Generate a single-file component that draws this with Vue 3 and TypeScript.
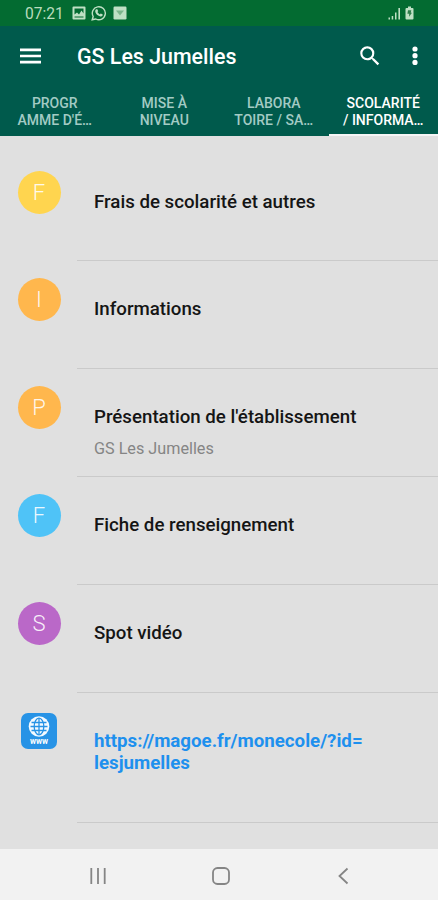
<script setup lang="ts">
interface Tab {
  first: string
  second: string
  active?: boolean
}
interface Entry {
  title: string
  letter?: string
  tone?: string
  subtitle?: string
  continuation?: string
}

const tabs: Tab[] = [
  { first: 'PROGR', second: "AMME D'É…" },
  { first: 'MISE À', second: 'NIVEAU' },
  { first: 'LABORA', second: 'TOIRE / SA…' },
  { first: 'SCOLARITÉ', second: '/ INFORMA…', active: true },
]

const entries: Entry[] = [
  { letter: 'F', tone: 'yellow', title: 'Frais de scolarité et autres' },
  { letter: 'I', tone: 'orange', title: 'Informations' },
  { letter: 'P', tone: 'orange', title: "Présentation de l'établissement", subtitle: 'GS Les Jumelles' },
  { letter: 'F', tone: 'blue', title: 'Fiche de renseignement' },
  { letter: 'S', tone: 'purple', title: 'Spot vidéo' },
  { title: 'https://magoe.fr/monecole/?id=', continuation: 'lesjumelles' },
]
</script>

<template>
  <div class="screen">
    <div class="status">
      <span class="clock">07:21</span>
      <svg class="glyph" width="14" height="14" viewBox="0 0 14 14">
        <path fill-rule="evenodd" d="M1.5.5h11a1 1 0 0 1 1 1v11a1 1 0 0 1-1 1h-11a1 1 0 0 1-1-1v-11a1 1 0 0 1 1-1zM2.5 2.5v6l2.5-2 2 2 2.5-4 2 3v-5zM2.5 10.5v1h9v-1z" />
      </svg>
      <svg class="glyph chat" width="16" height="16" viewBox="0 0 16 16">
        <path class="line" d="M1.2 14.8l1-3.3A6.5 6.5 0 1 1 4.8 14z" />
        <path d="M5.1 4.3h1.3l.8 1.9-.8.9c.5 1 1.300 1.800 2.400 2.300l.9-1 1.900.9v1.200c-.5 1-1.700 1.200-2.800.8C6.500 10.500 5 9 4.400 7.200 4 6 4.400 4.800 5.100 4.300z" />
      </svg>
      <svg class="glyph" width="14" height="14" viewBox="0 0 14 14">
        <rect x=".5" y=".5" width="13" height="13" rx="1.200" />
        <path class="cut soft" d="M3 4.500h8L7 9.500z" />
      </svg>
      <span class="grow"></span>
      <svg class="glyph signal" width="13" height="13" viewBox="0 0 13 13">
        <path d="M.5 10.500h1.500v2H.5zM3.700 9h1.500v3.500H3.700zM7 5.500h1.500v7H7zM10.400 1H12v11.500h-1.600z" />
      </svg>
      <svg class="glyph" width="9" height="14" viewBox="0 0 9 14">
        <path d="M3 .5h3v1.500h1.500a1 1 0 0 1 1 1V12.500a1 1 0 0 1-1 1h-6a1 1 0 0 1-1-1V3a1 1 0 0 1 1-1H3z" />
        <path class="cut" d="M3 4.200h3.300L5.800 6.800H7l-3 4 .2-3H2.400z" />
      </svg>
    </div>

    <header class="bar">
      <svg class="menu" width="22" height="16" viewBox="0 0 22 16">
        <path d="M0 .5h21v2.700H0zM0 6.700h21v2.600H0zM0 12.800h21v2.700H0z" />
      </svg>
      <h1>GS Les Jumelles</h1>
      <svg class="search" width="26" height="26" viewBox="0 0 24 24">
        <path d="M15.500 14h-.79l-.28-.27A6.470 6.470 0 0 0 16 9.500 6.500 6.500 0 1 0 9.500 16c1.610 0 3.090-.59 4.230-1.570l.27.28v.79l5 4.990L20.490 19zm-6 0C7.010 14 5 11.990 5 9.500S7.010 5 9.500 5 14 7.010 14 9.500 11.990 14 9.500 14z" />
      </svg>
      <svg class="more" width="6" height="20" viewBox="0 0 6 20">
        <circle cx="3" cy="3" r="2.600" /><circle cx="3" cy="9.700" r="2.600" /><circle cx="3" cy="16.400" r="2.600" />
      </svg>
    </header>

    <nav class="tabs">
      <div v-for="tab in tabs" :key="tab.first" class="tab" :class="{ active: tab.active }">
        <span>{{ tab.first }}</span>
        <span>{{ tab.second }}</span>
      </div>
    </nav>

    <main class="list">
      <div v-for="entry in entries" :key="entry.title" class="row" :class="{ tall: entry.continuation }">
        <div class="lead">
          <div v-if="entry.letter" class="avatar" :class="entry.tone">{{ entry.letter }}</div>
          <svg v-else class="web" width="36" height="36" viewBox="0 0 36 36">
            <rect width="36" height="36" rx="7" fill="#2793e6" />
            <circle cx="18" cy="13.500" r="10.300" fill="#f4faff" />
            <g fill="none" stroke="#2793e6" stroke-width="1.300">
              <path d="M18 5.500v16M10.500 9.500h15M9.500 13.500h17M10.500 17.500h15" />
              <ellipse cx="18" cy="13.500" rx="4.800" ry="8.300" />
            </g>
            <text x="18" y="31.200" text-anchor="middle" textLength="18" lengthAdjust="spacingAndGlyphs">www</text>
          </svg>
        </div>
        <div class="body">
          <div class="title" :class="{ link: entry.continuation }">
            <span>{{ entry.title }}</span>
            <span v-if="entry.continuation">{{ entry.continuation }}</span>
          </div>
          <div v-if="entry.subtitle" class="subtitle">{{ entry.subtitle }}</div>
        </div>
      </div>
    </main>

    <footer class="nav">
      <svg width="18" height="18" viewBox="0 0 18 18"><path d="M2.300 1v16M9 1v16M15.700 1v16" /></svg>
      <svg width="18" height="18" viewBox="0 0 18 18"><rect x="1" y="1" width="16" height="16" rx="4.500" /></svg>
      <svg width="18" height="18" viewBox="0 0 18 18"><path d="M13.500 1.500L5.500 9l8 7.500" /></svg>
    </footer>
  </div>
</template>

<style>
body {
  margin: 0;
}
</style>

<style scoped>
.screen {
  display: flex;
  flex-direction: column;
  width: 438px;
  height: 900px;
  overflow: hidden;
  background: #e0e0e0;
  font-family: Roboto, 'Liberation Sans', sans-serif;
}
.status {
  display: flex;
  align-items: center;
  box-sizing: border-box;
  height: 26px;
  padding: 0 24px 0 25px;
  background: #036b31;
}
.clock {
  width: 47px;
  color: #b9dcbd;
  font-size: 15.6px;
  line-height: 20px;
  padding-top: 1px;
}
.glyph {
  fill: #bfe0c4;
}
.chat {
  margin: 0 6px 0 5px;
}
.line {
  fill: none;
  stroke: #bfe0c4;
  stroke-width: 1.4;
}
.cut {
  fill: #2f7d4b;
}
.cut.soft {
  fill: #7db58c;
}
.grow {
  flex: 1;
}
.signal {
  margin-right: 4px;
}
.bar {
  display: flex;
  align-items: center;
  height: 60px;
  padding: 0 20px;
  background: #005a4c;
  fill: #fff;
}
.menu {
  width: 22px;
  margin-right: 35px;
}
h1 {
  flex: 1;
  margin: 0;
  padding-top: 2px;
  color: #fff;
  font-size: 21.4px;
  font-weight: 500;
  line-height: 30px;
  white-space: nowrap;
}
.search {
  margin-right: 29px;
}
.tabs {
  display: grid;
  grid-template-columns: repeat(4, 1fr);
  height: 50px;
  background: #005a4c;
}
.tab {
  display: flex;
  flex-direction: column;
  align-items: center;
  box-sizing: border-box;
  padding-top: 9px;
  border-bottom: 2px solid transparent;
  color: #a3cbc4;
  font-size: 14px;
  font-weight: 500;
  line-height: 17px;
  white-space: nowrap;
}
.tab.active {
  border-bottom-color: #f5f5f5;
  color: #fff;
}
.list {
  flex: 1;
  padding-top: 17.6px;
}
.row {
  display: flex;
  height: 107.8px;
}
.row.tall {
  height: 130px;
}
.lead {
  box-sizing: border-box;
  width: 77px;
  padding: 17px 0 0 17.5px;
}
.avatar {
  width: 43px;
  height: 43px;
  border-radius: 50%;
  color: rgba(255, 255, 255, 0.9);
  font-size: 22px;
  font-weight: 300;
  line-height: 43px;
  text-align: center;
}
.yellow {
  background: #ffd54f;
}
.orange {
  background: #ffb74d;
}
.blue {
  background: #4fc3f7;
}
.purple {
  background: #ba68c8;
}
.web {
  display: block;
  margin: 3px 0 0 3.5px;
}
.web text {
  fill: #fff;
  font-size: 9px;
  font-weight: 700;
}
.body {
  flex: 1;
  box-sizing: border-box;
  padding: 37px 0 0 17px;
  border-bottom: 1px solid #cacaca;
}
.title {
  display: flex;
  flex-direction: column;
  color: #151515;
  font-size: 18.7px;
  font-weight: 500;
  line-height: 22px;
  white-space: nowrap;
}
.title.link {
  color: #1e90ee;
  font-weight: 700;
}
.subtitle {
  margin-top: 11px;
  color: #858585;
  font-size: 16.2px;
  line-height: 20px;
}
.nav {
  display: flex;
  justify-content: space-between;
  align-items: center;
  box-sizing: border-box;
  height: 51px;
  padding: 3px 86px 0 89px;
  background: #f2f2f2;
}
.nav svg {
  fill: none;
  stroke: #858585;
  stroke-width: 1.8;
}
</style>
